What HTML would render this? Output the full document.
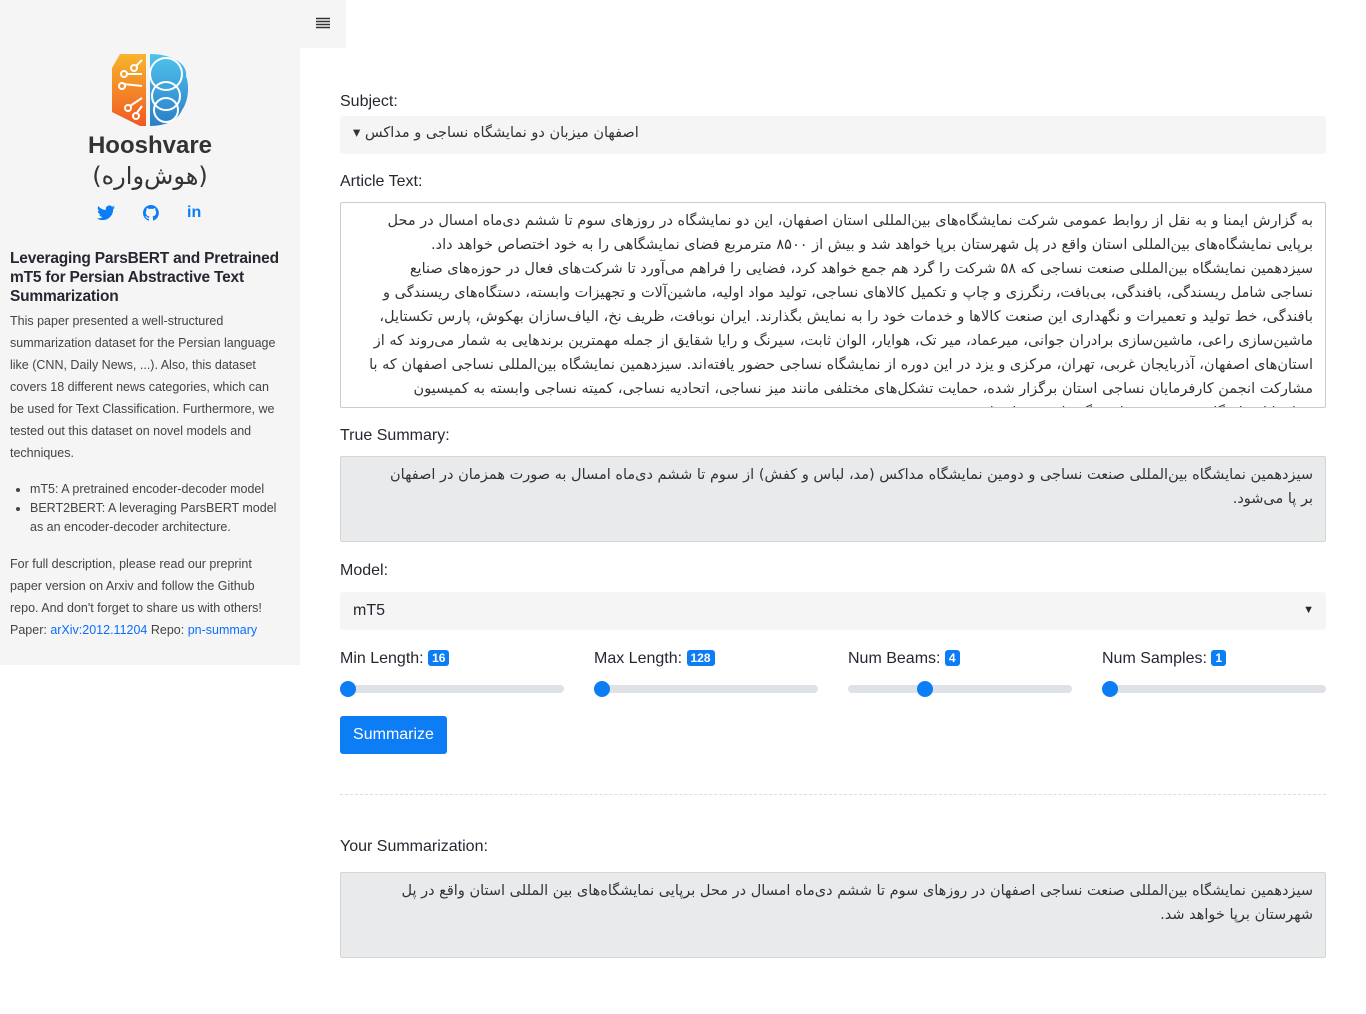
<!DOCTYPE html>
<html><head><meta charset="utf-8"><style>
*{box-sizing:border-box;margin:0;padding:0}
body{width:1366px;height:1014px;background:#fff;font-family:"Liberation Sans",sans-serif;color:#262730;position:relative;overflow:hidden}
.fa{font-family:"DejaVu Sans","Liberation Sans",sans-serif}
#side{position:absolute;left:0;top:0;width:300px;height:665px;background:#f5f5f5}
#ham{position:absolute;left:300px;top:0;width:46px;height:48px;background:#f5f5f5}
.lbl{position:absolute;left:340px;font-size:16px;color:#262730}
.box{position:absolute;left:340px;width:986px}
.rtl{direction:rtl;text-align:right;font-size:14.5px;line-height:24px;color:#333;white-space:nowrap;overflow:hidden}
.badge{display:inline-block;background:#0d7df5;color:#fff;font-size:12px;font-weight:bold;padding:1px 4px;border-radius:3px;vertical-align:1px}
.sl{position:absolute;top:685px;height:8px;width:224px;background:#dee1e6;border-radius:4px}
.sl i{position:absolute;top:-4px;width:16px;height:16px;border-radius:50%;background:#0d7df5}
.sd{font-size:12.5px;color:#444;line-height:22px}
a{color:#0d6efd;text-decoration:none}
</style></head><body>
<div id="side">
<svg style="position:absolute;left:112px;top:54px" width="76" height="72" viewBox="0 0 76 72">
<defs><linearGradient id="o" x1="0" y1="0" x2="0" y2="1"><stop offset="0" stop-color="#f7b52c"/><stop offset="1" stop-color="#f05a22"/></linearGradient>
<linearGradient id="b" x1="0" y1="0" x2="0" y2="1"><stop offset="0" stop-color="#4fc3ec"/><stop offset="1" stop-color="#2a7ec9"/></linearGradient></defs>
<path d="M8 0H34V72H28L0 58V14Z" fill="url(#o)"/>
<path d="M38 0C60 0 76 10 74 22C78 32 76 48 70 56C66 66 54 72 38 72Z" fill="url(#b)"/>
<g fill="none" stroke="#fff" stroke-width="2"><circle cx="54" cy="20" r="16"/><circle cx="54" cy="42" r="14"/><circle cx="54" cy="56" r="12"/>
<path d="M30 6L24 12M30 20H14M30 32L12 30M30 44L18 52M30 52L24 60"/><circle cx="22" cy="14" r="3"/><circle cx="12" cy="20" r="3"/><circle cx="10" cy="32" r="3"/><circle cx="16" cy="54" r="3"/><circle cx="24" cy="62" r="3"/></g></svg>
<div style="position:absolute;top:131px;width:300px;text-align:center;font-size:24px;font-weight:bold;color:#333;line-height:30px">Hooshvare<br><span class="fa" style="font-weight:normal">(هوش‌واره)</span></div>
<div style="position:absolute;top:204px;left:97px;color:#0d7df5;font-size:16px;font-weight:bold">
<svg width="18" height="16" viewBox="0 0 24 20" style="position:absolute;left:0;top:1px"><path fill="#0d7df5" d="M24 2.4a10 10 0 0 1-2.8.8A5 5 0 0 0 23.3.4a10 10 0 0 1-3.1 1.2A4.9 4.9 0 0 0 11.8 6 14 14 0 0 1 1.7.9a4.9 4.9 0 0 0 1.5 6.6 5 5 0 0 1-2.2-.6 4.9 4.9 0 0 0 4 4.9 5 5 0 0 1-2.2.1 4.9 4.9 0 0 0 4.6 3.4A9.9 9.9 0 0 1 0 17.3 14 14 0 0 0 7.5 19.5c9 0 14-7.5 14-14v-.6A10 10 0 0 0 24 2.4z"/></svg>
<svg width="16" height="16" viewBox="0 0 16 16" style="position:absolute;left:46px;top:1px"><path fill="#0d7df5" d="M8 0a8 8 0 0 0-2.5 15.6c.4 0 .5-.2.5-.4v-1.5c-2.2.5-2.7-1-2.7-1-.4-.9-.9-1.2-.9-1.2-.7-.5.1-.5.1-.5.8.1 1.2.8 1.2.8.7 1.3 1.9.9 2.3.7.1-.5.3-.9.5-1.1-1.8-.2-3.6-.9-3.6-4 0-.9.3-1.6.8-2.1-.1-.2-.4-1 .1-2.1 0 0 .7-.2 2.2.8a7.5 7.5 0 0 1 4 0c1.5-1 2.2-.8 2.2-.8.4 1.1.2 1.9.1 2.1.5.6.8 1.3.8 2.1 0 3.1-1.9 3.8-3.6 4 .3.3.5.8.5 1.5v2.2c0 .2.1.5.6.4A8 8 0 0 0 8 0z"/></svg>
<span style="position:absolute;left:90px;top:0px">in</span></div>
<div style="position:absolute;left:10px;top:249px;width:285px;font-size:15.5px;font-weight:bold;line-height:19px;color:#262730;letter-spacing:-0.2px">Leveraging ParsBERT and Pretrained mT5 for Persian Abstractive Text Summarization</div>
<div class="sd" style="position:absolute;left:10px;top:310px;width:274px">This paper presented a well-structured summarization dataset for the Persian language like (CNN, Daily News, ...). Also, this dataset covers 18 different news categories, which can be used for Text Classification. Furthermore, we tested out this dataset on novel models and techniques.</div>
<ul class="sd" style="position:absolute;left:30px;top:480px;width:255px;line-height:19px"><li>mT5: A pretrained encoder-decoder model</li><li>BERT2BERT: A leveraging ParsBERT model as an encoder-decoder architecture.</li></ul>
<div class="sd" style="position:absolute;left:10px;top:553px;width:270px">For full description, please read our preprint paper version on Arxiv and follow the Github repo. And don't forget to share us with others!<br>Paper: <a>arXiv:2012.11204</a> Repo: <a>pn-summary</a></div>
</div>
<div id="ham"><svg style="position:absolute;left:16px;top:17px" width="14" height="13"><path d="M0 1.5H14M0 4.5H14M0 7.5H14M0 10.5H14" stroke="#333" stroke-width="1.4"/></svg></div>

<div class="lbl" style="top:93px">Subject:</div>
<div class="box" style="top:116px;height:38px;background:#f5f5f5;border-radius:3px"><div class="fa" style="position:absolute;left:13px;top:9px;font-size:14.5px;color:#333">▾ <span dir="rtl">اصفهان میزبان دو نمایشگاه نساجی و مداکس</span></div></div>
<div class="lbl" style="top:173px">Article Text:</div>
<div class="box fa rtl" style="top:202px;height:206px;border:1px solid #ccc;border-radius:2px;padding:6px 12px">
<div>به گزارش ایمنا و به نقل از روابط عمومی شرکت نمایشگاه‌های بین‌المللی استان اصفهان، این دو نمایشگاه در روزهای سوم تا ششم دی‌ماه امسال در محل</div>
<div>برپایی نمایشگاه‌های بین‌المللی استان واقع در پل شهرستان برپا خواهد شد و بیش از ۸۵۰۰ مترمربع فضای نمایشگاهی را به خود اختصاص خواهد داد.</div>
<div>سیزدهمین نمایشگاه بین‌المللی صنعت نساجی که ۵۸ شرکت را گرد هم جمع خواهد کرد، فضایی را فراهم می‌آورد تا شرکت‌های فعال در حوزه‌های صنایع</div>
<div>نساجی شامل ریسندگی، بافندگی، بی‌بافت، رنگرزی و چاپ و تکمیل کالاهای نساجی، تولید مواد اولیه، ماشین‌آلات و تجهیزات وابسته، دستگاه‌های ریسندگی و</div>
<div>بافندگی، خط تولید و تعمیرات و نگهداری این صنعت کالاها و خدمات خود را به نمایش بگذارند. ایران نوبافت، ظریف نخ، الیاف‌سازان بهکوش، پارس تکستایل،</div>
<div>ماشین‌سازی راعی، ماشین‌سازی برادران جوانی، میرعماد، میر تک، هوایار، الوان ثابت، سیرنگ و رایا شقایق از جمله مهمترین برندهایی به شمار می‌روند که از</div>
<div>استان‌های اصفهان، آذربایجان غربی، تهران، مرکزی و یزد در این دوره از نمایشگاه نساجی حضور یافته‌اند. سیزدهمین نمایشگاه بین‌المللی نساجی اصفهان که با</div>
<div>مشارکت انجمن کارفرمایان نساجی استان برگزار شده، حمایت تشکل‌های مختلفی مانند میز نساجی، اتحادیه نساجی، کمیته نساجی وابسته به کمیسیون</div>
<div>صنایع اتاق بازرگانی و مجموعه‌های دیگر را به همراه دارد</div>
</div>
<div class="lbl" style="top:427px">True Summary:</div>
<div class="box fa rtl" style="top:456px;height:86px;background:#e9eaec;border:1px solid #d5d5d5;border-radius:2px;padding:6px 12px">
<div>سیزدهمین نمایشگاه بین‌المللی صنعت نساجی و دومین نمایشگاه مداکس (مد، لباس و کفش) از سوم تا ششم دی‌ماه امسال به صورت همزمان در اصفهان</div>
<div>بر پا می‌شود.</div></div>
<div class="lbl" style="top:562px">Model:</div>
<div class="box" style="top:592px;height:38px;background:#f5f5f5;border-radius:3px"><span style="position:absolute;left:13px;top:10px;font-size:16px">mT5</span><span style="position:absolute;right:12px;top:12px;font-size:11px">▼</span></div>
<div class="lbl" style="top:650px">Min Length: <span class="badge">16</span></div>
<div class="lbl" style="top:650px;left:594px">Max Length: <span class="badge">128</span></div>
<div class="lbl" style="top:650px;left:848px">Num Beams: <span class="badge">4</span></div>
<div class="lbl" style="top:650px;left:1102px">Num Samples: <span class="badge">1</span></div>
<div class="sl" style="left:340px"><i style="left:0"></i></div>
<div class="sl" style="left:594px"><i style="left:0"></i></div>
<div class="sl" style="left:848px"><i style="left:69px"></i></div>
<div class="sl" style="left:1102px"><i style="left:0"></i></div>
<div style="position:absolute;left:340px;top:716px;width:107px;height:38px;background:#0d7df5;border-radius:3px;color:#fff;font-size:16px;text-align:center;line-height:38px">Summarize</div>
<div style="position:absolute;left:340px;top:794px;width:986px;border-top:1px dashed #ddd"></div>
<div class="lbl" style="top:838px">Your Summarization:</div>
<div class="box fa rtl" style="top:872px;height:86px;background:#e9eaec;border:1px solid #d5d5d5;border-radius:2px;padding:6px 12px">
<div>سیزدهمین نمایشگاه بین‌المللی صنعت نساجی اصفهان در روزهای سوم تا ششم دی‌ماه امسال در محل برپایی نمایشگاه‌های بین المللی استان واقع در پل</div>
<div>شهرستان برپا خواهد شد.</div></div>
</body></html>
